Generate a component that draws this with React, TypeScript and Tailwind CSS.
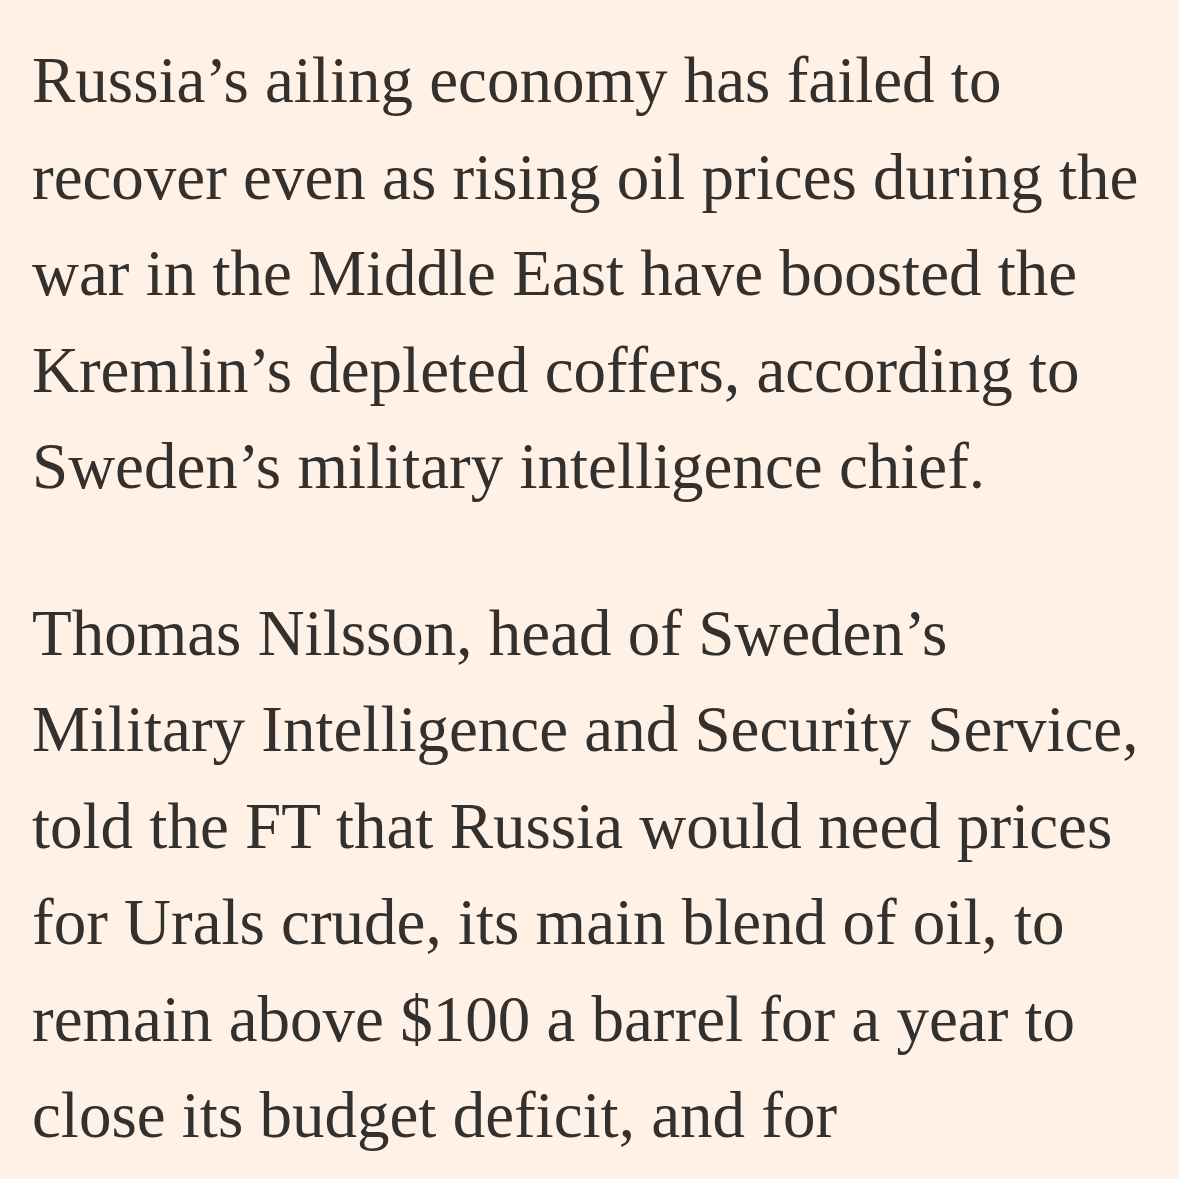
const paragraphs: string[][] = [
  [
    "Russia’s ailing economy has failed to",
    "recover even as rising oil prices during the",
    "war in the Middle East have boosted the",
    "Kremlin’s depleted coffers, according to",
    "Sweden’s military intelligence chief.",
  ],
  [
    "Thomas Nilsson, head of Sweden’s",
    "Military Intelligence and Security Service,",
    "told the FT that Russia would need prices",
    "for Urals crude, its main blend of oil, to",
    "remain above $100 a barrel for a year to",
    "close its budget deficit, and for",
  ],
];

export default function App() {
  return (
    <div className="h-[1179px] w-[1179px] overflow-hidden bg-[#fff1e5] pl-[32px] pt-[32px] text-[#33302e]">
      <div className="flex flex-col gap-[70px] font-['Liberation_Serif',Georgia,serif] text-[65px] leading-[96.5px]">
        {paragraphs.map((lines, i) => (
          <p key={i} className="whitespace-nowrap">
            {lines.map((line, j) => (
              <span key={j} className="block">
                {line}
              </span>
            ))}
          </p>
        ))}
      </div>
    </div>
  );
}
